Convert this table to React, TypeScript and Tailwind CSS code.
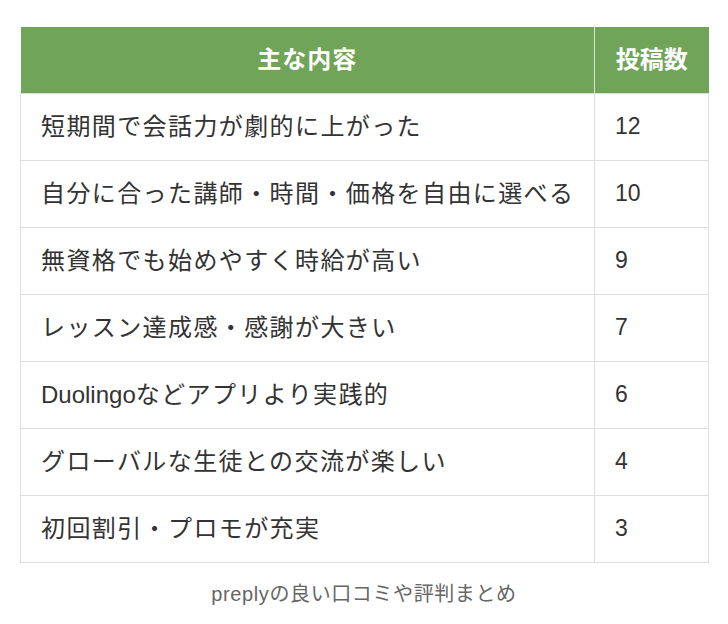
const rows: [string, number][] = [
  ['短期間で会話力が劇的に上がった', 12],
  ['自分に合った講師・時間・価格を自由に選べる', 10],
  ['無資格でも始めやすく時給が高い', 9],
  ['レッスン達成感・感謝が大きい', 7],
  ['Duolingoなどアプリより実践的', 6],
  ['グローバルな生徒との交流が楽しい', 4],
  ['初回割引・プロモが充実', 3],
];

export default function App() {
  return (
    <div
      className="w-[728px] h-[624px] bg-white pt-[27px] px-[20px]"
      style={{ fontFamily: '"Liberation Sans", "Noto Sans CJK JP", sans-serif' }}
    >
      <table className="w-[689px] border-collapse table-fixed text-[#333]">
        <colgroup>
          <col className="w-[574px]" />
          <col />
        </colgroup>
        <thead>
          <tr className="bg-[#70a459] text-white h-[66px]">
            <th className="border-r border-[#d9e6d3] text-[24px] font-bold text-center tracking-[1px]">主な内容</th>
            <th className="text-[24px] font-bold text-center">投稿数</th>
          </tr>
        </thead>
        <tbody>
          {rows.map(([label, count]) => (
            <tr key={label} className="h-[67px]">
              <td className="border border-[#dddddd] pl-[20px] pr-0 text-[24px] leading-none tracking-[1.4px] whitespace-nowrap">
                {label.startsWith('Duolingo') ? (
                  <>
                    <span className="tracking-normal">Duolingo</span>
                    {label.slice(8)}
                  </>
                ) : (
                  label
                )}
              </td>
              <td className="border border-[#dddddd] px-[20px] text-[23px] leading-none">{count}</td>
            </tr>
          ))}
        </tbody>
      </table>
      <p className="mt-[16px] text-center text-[20px] text-[#666] tracking-[0.6px]">preplyの良い口コミや評判まとめ</p>
    </div>
  );
}
